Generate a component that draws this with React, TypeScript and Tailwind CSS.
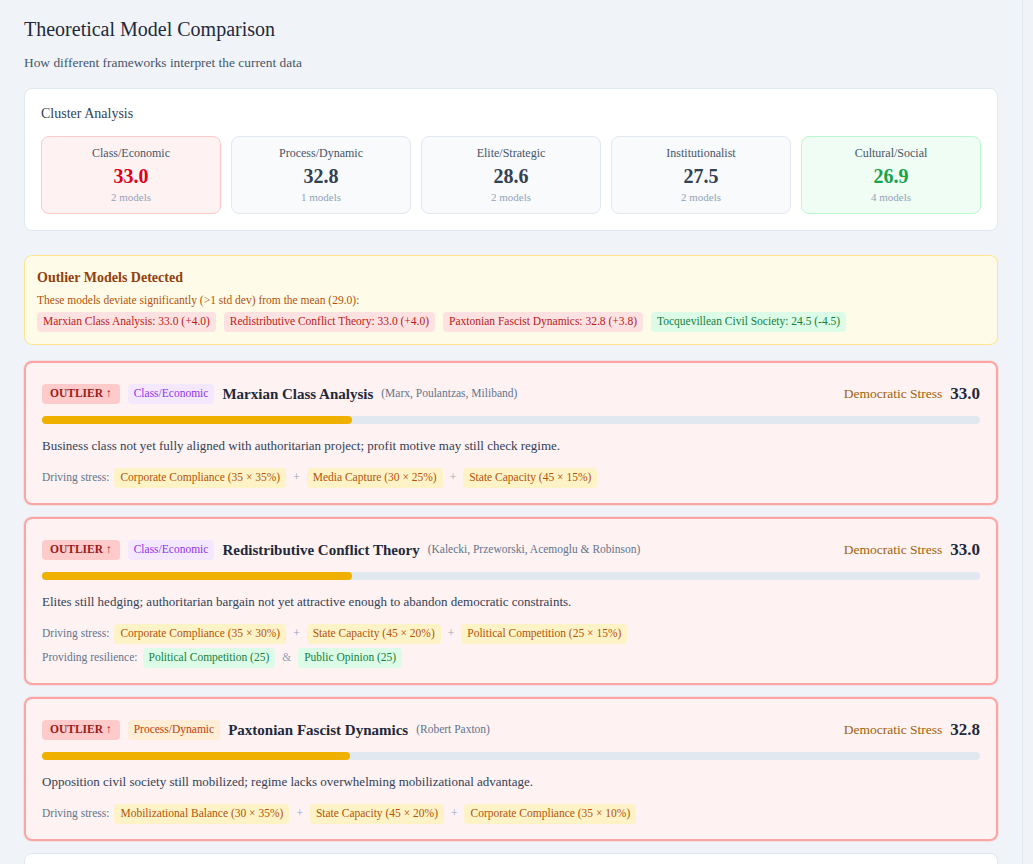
import React from 'react';

interface Model {
  name: string;
  authors: string;
  category: string;
  categoryTone: 'purple' | 'orange';
  score: number;
  text: string;
  stress: string[];
  resilience?: string[];
}

const clusters = [
  { name: 'Class/Economic', value: '33.0', count: '2 models', tone: 'high' },
  { name: 'Process/Dynamic', value: '32.8', count: '1 models', tone: 'mid' },
  { name: 'Elite/Strategic', value: '28.6', count: '2 models', tone: 'mid' },
  { name: 'Institutionalist', value: '27.5', count: '2 models', tone: 'mid' },
  { name: 'Cultural/Social', value: '26.9', count: '4 models', tone: 'low' },
];

const outliers = [
  { label: 'Marxian Class Analysis: 33.0 (+4.0)', up: true },
  { label: 'Redistributive Conflict Theory: 33.0 (+4.0)', up: true },
  { label: 'Paxtonian Fascist Dynamics: 32.8 (+3.8)', up: true },
  { label: 'Tocquevillean Civil Society: 24.5 (-4.5)', up: false },
];

const models: Model[] = [
  {
    name: 'Marxian Class Analysis',
    authors: '(Marx, Poulantzas, Miliband)',
    category: 'Class/Economic',
    categoryTone: 'purple',
    score: 33.0,
    text: 'Business class not yet fully aligned with authoritarian project; profit motive may still check regime.',
    stress: ['Corporate Compliance (35 × 35%)', 'Media Capture (30 × 25%)', 'State Capacity (45 × 15%)'],
  },
  {
    name: 'Redistributive Conflict Theory',
    authors: '(Kalecki, Przeworski, Acemoglu & Robinson)',
    category: 'Class/Economic',
    categoryTone: 'purple',
    score: 33.0,
    text: 'Elites still hedging; authoritarian bargain not yet attractive enough to abandon democratic constraints.',
    stress: ['Corporate Compliance (35 × 30%)', 'State Capacity (45 × 20%)', 'Political Competition (25 × 15%)'],
    resilience: ['Political Competition (25)', 'Public Opinion (25)'],
  },
  {
    name: 'Paxtonian Fascist Dynamics',
    authors: '(Robert Paxton)',
    category: 'Process/Dynamic',
    categoryTone: 'orange',
    score: 32.8,
    text: 'Opposition civil society still mobilized; regime lacks overwhelming mobilizational advantage.',
    stress: ['Mobilizational Balance (30 × 35%)', 'State Capacity (45 × 20%)', 'Corporate Compliance (35 × 10%)'],
  },
];

const ModelCard: React.FC<{ model: Model }> = ({ model }) => {
  return (
    <div className="rounded-lg border-2 border-[#fca5a5] bg-[#fef2f2] px-4 pt-[19px] pb-[15px] shadow-[0_0_0_1px_rgba(252,165,165,0.25)]">
      <div className="flex h-6 items-center justify-between">
        <div className="flex items-center">
          <span className="flex h-5 items-center rounded bg-[#fecaca] px-2 text-[11.5px] font-bold text-[#991b1b]">
            OUTLIER ↑
          </span>
          <span
            className={
              model.categoryTone === 'purple'
                ? 'ml-2 flex h-5 items-center rounded bg-[#f3e8ff] px-1.5 text-[11.5px] text-[#9333ea]'
                : 'ml-2 flex h-5 items-center rounded bg-[#ffedd5] px-1.5 text-[11.5px] text-[#c2410c]'
            }
          >
            {model.category}
          </span>
          <span className="ml-2 text-[15px] leading-6 font-bold text-[#1e293b]">{model.name}</span>
          <span className="ml-2 text-[11.5px] text-[#64748b]">{model.authors}</span>
        </div>
        <div className="flex items-center">
          <span className="text-[13.5px] text-[#a16207]">Democratic Stress</span>
          <span className="ml-2 text-[17px] leading-6 font-bold text-[#1e293b]">{model.score.toFixed(1)}</span>
        </div>
      </div>
      <div className="mt-2.5 h-2 w-full rounded-full bg-[#e2e8f0]">
        <div className="h-2 rounded-full bg-[#f0b000]" style={{ width: `${model.score}%` }} />
      </div>
      <p className="mt-3 text-[13px] leading-5 text-[#334155]">{model.text}</p>
      <div className="mt-3 flex items-center text-[11.5px]">
        <span className="mr-[5px] text-[#64748b]">Driving stress:</span>
        {model.stress.map((s, i) => (
          <React.Fragment key={s}>
            {i > 0 && <span className="mx-[7px] text-[#94a3b8]">+</span>}
            <span className="flex h-5 items-center rounded bg-[#fef3c7] px-1.5 text-[#b45309]">{s}</span>
          </React.Fragment>
        ))}
      </div>
      {model.resilience && (
        <div className="mt-1 flex items-center text-[11.5px]">
          <span className="mr-[5px] text-[#64748b]">Providing resilience:</span>
          {model.resilience.map((s, i) => (
            <React.Fragment key={s}>
              {i > 0 && <span className="mx-[7px] text-[#94a3b8]">&amp;</span>}
              <span className="flex h-5 items-center rounded bg-[#dcfce7] px-1.5 text-[#15803d]">{s}</span>
            </React.Fragment>
          ))}
        </div>
      )}
    </div>
  );
};

const App: React.FC = () => {
  return (
    <div className="flex h-[864px] overflow-hidden bg-[#f0f4f8] font-['Liberation_Serif',serif]">
      <div className="w-[1023px] shrink-0 border-r border-[#e2e8f0] px-6 pt-[15px]">
        <h1 className="text-[20px] leading-7 text-[#1e293b]">Theoretical Model Comparison</h1>
        <p className="mt-2.5 text-[13.4px] leading-5 text-[#475569]">How different frameworks interpret the current data</p>

        <div className="mt-[15px] rounded-lg border border-[#e2e8f0] bg-white p-4">
          <h2 className="text-[14px] leading-[17px] text-[#334155]">Cluster Analysis</h2>
          <div className="mt-3.5 grid grid-cols-5 gap-2.5">
            {clusters.map((c) => (
              <div
                key={c.name}
                className={
                  c.tone === 'high'
                    ? 'rounded-lg border border-[#fecaca] bg-[#fef2f2] py-2 text-center'
                    : c.tone === 'low'
                      ? 'rounded-lg border border-[#bbf7d0] bg-[#f0fdf4] py-2 text-center'
                      : 'rounded-lg border border-[#e2e8f0] bg-[#f8fafc] py-2 text-center'
                }
              >
                <div className="text-[12px] leading-[17px] text-[#475569]">{c.name}</div>
                <div
                  className={
                    c.tone === 'high'
                      ? 'text-[20px] font-bold leading-[28px] text-[#e0001b]'
                      : c.tone === 'low'
                        ? 'text-[20px] font-bold leading-[28px] text-[#16a34a]'
                        : 'text-[20px] font-bold leading-[28px] text-[#334155]'
                  }
                >
                  {c.value}
                </div>
                <div className="text-[11px] leading-[15px] text-[#94a3b8]">{c.count}</div>
              </div>
            ))}
          </div>
        </div>

        <div className="mt-6 rounded-lg border border-[#fde68a] bg-[#fefbe8] px-3 py-3">
          <h3 className="text-[14px] font-bold leading-5 text-[#92400e]">Outlier Models Detected</h3>
          <p className="mt-1 text-[11.5px] leading-4 text-[#b45309]">
            These models deviate significantly (&gt;1 std dev) from the mean (29.0):
          </p>
          <div className="mt-1 flex flex-wrap gap-2">
            {outliers.map((o) => (
              <span
                key={o.label}
                className={
                  o.up
                    ? 'flex h-5 items-center rounded bg-[#fee2e2] px-1.5 text-[11.5px] text-[#b91c1c]'
                    : 'flex h-5 items-center rounded bg-[#dcfce7] px-1.5 text-[11.5px] text-[#15803d]'
                }
              >
                {o.label}
              </span>
            ))}
          </div>
        </div>

        <div className="mt-4 flex flex-col gap-3">
          {models.map((m) => (
            <ModelCard key={m.name} model={m} />
          ))}
          <div className="h-24 rounded-lg border border-[#e2e8f0] bg-white" />
        </div>
      </div>
    </div>
  );
};

export default App;
